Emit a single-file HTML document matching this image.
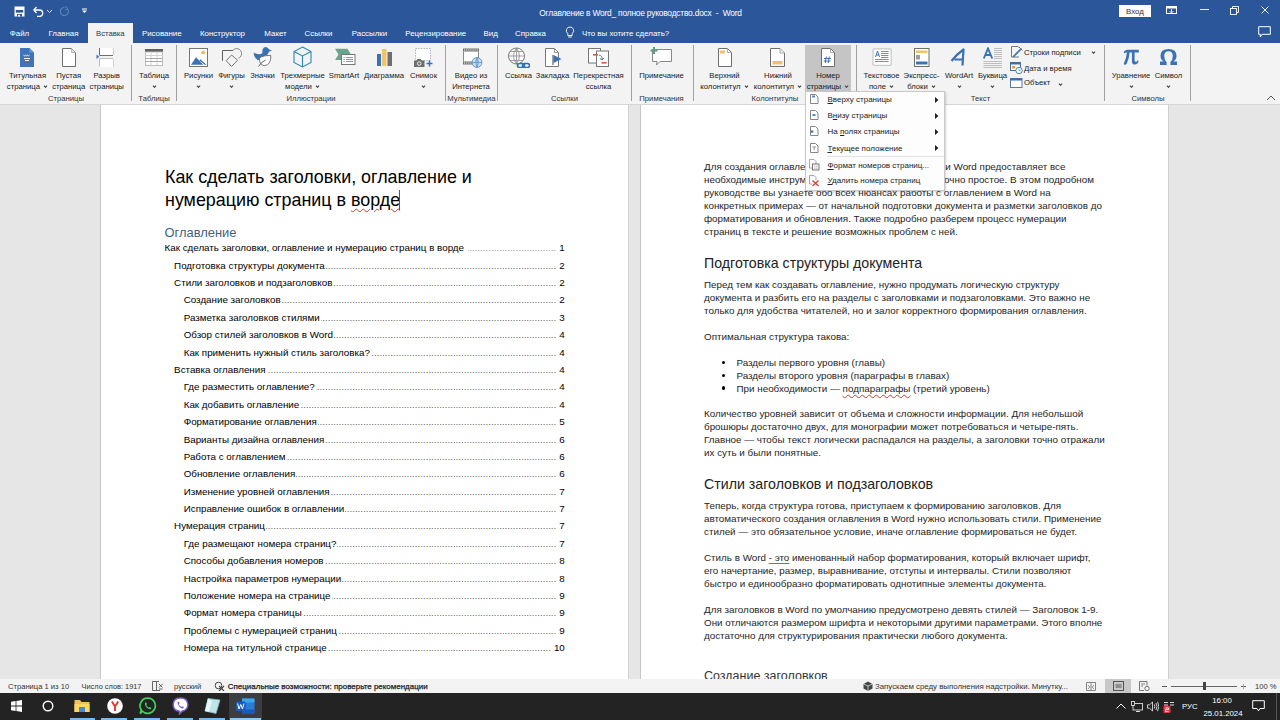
<!DOCTYPE html><html><head><meta charset="utf-8"><style>
*{margin:0;padding:0;box-sizing:border-box}
html,body{width:1280px;height:720px;overflow:hidden;background:#fff}
body{position:relative;font-family:"Liberation Sans",sans-serif}
.t{position:absolute;white-space:nowrap;line-height:normal}
.toc{position:absolute;display:flex;white-space:nowrap;line-height:normal;color:#000}
.toc .ld{flex:1;margin:0 3px 0 1px;overflow:hidden;direction:rtl;color:#666;letter-spacing:0}
.toc .pn{text-align:right}
.dd{vertical-align:1.5px;margin-left:1px}
.sq{text-decoration:underline wavy #d33;text-decoration-thickness:1px;text-underline-offset:2px}
.gq{text-decoration:underline solid #4a7fd0;text-decoration-thickness:1px;text-underline-offset:2px}
</style></head><body><div style="position:absolute;left:0px;top:0px;width:1280px;height:43px;background:#2b579a;"></div>
<div style="position:absolute;left:0px;top:43px;width:1280px;height:61px;background:#f3f3f3;"></div>
<div style="position:absolute;left:0px;top:104px;width:1280px;height:1px;background:#d6d6d6;"></div>
<div style="position:absolute;left:0px;top:105px;width:1280px;height:574px;background:#e6e6e6;"></div>
<div style="position:absolute;left:100px;top:105px;width:1px;height:574px;background:#c6c6c6;"></div>
<div style="position:absolute;left:101px;top:105px;width:527px;height:574px;background:#fff;"></div>
<div style="position:absolute;left:628px;top:105px;width:1px;height:574px;background:#d0d0d0;"></div>
<div style="position:absolute;left:640px;top:105px;width:1px;height:574px;background:#c6c6c6;"></div>
<div style="position:absolute;left:641px;top:105px;width:527px;height:574px;background:#fff;"></div>
<div style="position:absolute;left:1168px;top:105px;width:1px;height:574px;background:#d0d0d0;"></div>
<div style="position:absolute;left:0px;top:679px;width:1280px;height:14px;background:#f3f3f3;"></div>
<div style="position:absolute;left:0px;top:693px;width:1280px;height:27px;background:#232324;"></div>
<div class="t " style="left:440.5px;width:400px;text-align:center;top:7.60px;font-size:8.4px;color:#fff;letter-spacing:-0.2px">Оглавление в Word_ полное руководство.docx&nbsp;&nbsp;-&nbsp;&nbsp;Word</div>
<div class="t " style="left:-180.5px;width:400px;text-align:center;top:28.85px;font-size:7.9px;color:#fff;">Файл</div>
<div class="t " style="left:-136.5px;width:400px;text-align:center;top:28.85px;font-size:7.9px;color:#fff;">Главная</div>
<div class="t " style="left:-38.25px;width:400px;text-align:center;top:28.85px;font-size:7.9px;color:#fff;">Рисование</div>
<div class="t " style="left:22.5px;width:400px;text-align:center;top:28.85px;font-size:7.9px;color:#fff;">Конструктор</div>
<div class="t " style="left:75.5px;width:400px;text-align:center;top:28.85px;font-size:7.9px;color:#fff;">Макет</div>
<div class="t " style="left:118.5px;width:400px;text-align:center;top:28.85px;font-size:7.9px;color:#fff;">Ссылки</div>
<div class="t " style="left:169.5px;width:400px;text-align:center;top:28.85px;font-size:7.9px;color:#fff;">Рассылки</div>
<div class="t " style="left:235.75px;width:400px;text-align:center;top:28.85px;font-size:7.9px;color:#fff;">Рецензирование</div>
<div class="t " style="left:290.75px;width:400px;text-align:center;top:28.85px;font-size:7.9px;color:#fff;">Вид</div>
<div class="t " style="left:330.5px;width:400px;text-align:center;top:28.85px;font-size:7.9px;color:#fff;">Справка</div>
<div style="position:absolute;left:88px;top:23px;width:45px;height:20px;background:#f3f3f3;"></div>
<div class="t " style="left:-89.7px;width:400px;text-align:center;top:29.03px;font-size:7.7px;color:#2f3a48;">Вставка</div>
<div class="t " style="left:582px;top:28.85px;font-size:7.9px;color:#fff;">Что вы хотите сделать?</div>
<div style="position:absolute;left:1119px;top:5px;width:32px;height:12px;background:#fff;"></div>
<div class="t " style="left:935px;width:400px;text-align:center;top:6.85px;font-size:7.9px;color:#333;">Вход</div>
<div style="position:absolute;left:805px;top:45px;width:46px;height:46px;background:#c5c5c5;"></div>
<div class="t " style="left:-172.5px;width:400px;text-align:center;top:70.83px;font-size:7.7px;color:#1a1a1a;">Титульная</div>
<div class="t " style="left:-172.5px;width:400px;text-align:center;top:82.03px;font-size:7.7px;color:#1a1a1a;">страница <svg class="dd" width="5" height="3" viewBox="0 0 5 3"><path d="M0.9 0.7 L2.5 2.3 L4.1 0.7" fill="none" stroke="#444" stroke-width="1.1"/></svg></div>
<div class="t " style="left:-131.3px;width:400px;text-align:center;top:70.83px;font-size:7.7px;color:#1a1a1a;">Пустая</div>
<div class="t " style="left:-131.3px;width:400px;text-align:center;top:82.03px;font-size:7.7px;color:#1a1a1a;">страница</div>
<div class="t " style="left:-93.3px;width:400px;text-align:center;top:70.83px;font-size:7.7px;color:#1a1a1a;">Разрыв</div>
<div class="t " style="left:-93.3px;width:400px;text-align:center;top:82.03px;font-size:7.7px;color:#1a1a1a;">страницы</div>
<div class="t " style="left:-134px;width:400px;text-align:center;top:94.23px;font-size:7.7px;color:#333;">Страницы</div>
<div style="position:absolute;left:131px;top:45px;width:1px;height:56px;background:#a0a0a0;"></div>
<div class="t " style="left:-46px;width:400px;text-align:center;top:70.83px;font-size:7.7px;color:#1a1a1a;">Таблица</div>
<svg style="position:absolute;left:151.5px;top:84.5px" width="5" height="3" viewBox="0 0 5 3"><path d="M0.9 0.7 L2.5 2.3 L4.1 0.7" fill="none" stroke="#444" stroke-width="1.1"/></svg>
<div class="t " style="left:-46px;width:400px;text-align:center;top:94.23px;font-size:7.7px;color:#333;">Таблицы</div>
<div style="position:absolute;left:176px;top:45px;width:1px;height:56px;background:#a0a0a0;"></div>
<div class="t " style="left:-1.5px;width:400px;text-align:center;top:70.83px;font-size:7.7px;color:#1a1a1a;">Рисунки</div>
<svg style="position:absolute;left:196.0px;top:84.5px" width="5" height="3" viewBox="0 0 5 3"><path d="M0.9 0.7 L2.5 2.3 L4.1 0.7" fill="none" stroke="#444" stroke-width="1.1"/></svg>
<div class="t " style="left:31.5px;width:400px;text-align:center;top:70.83px;font-size:7.7px;color:#1a1a1a;">Фигуры</div>
<svg style="position:absolute;left:229.0px;top:84.5px" width="5" height="3" viewBox="0 0 5 3"><path d="M0.9 0.7 L2.5 2.3 L4.1 0.7" fill="none" stroke="#444" stroke-width="1.1"/></svg>
<div class="t " style="left:62.5px;width:400px;text-align:center;top:70.83px;font-size:7.7px;color:#1a1a1a;">Значки</div>
<div class="t " style="left:102.5px;width:400px;text-align:center;top:70.83px;font-size:7.7px;color:#1a1a1a;">Трехмерные</div>
<div class="t " style="left:102.5px;width:400px;text-align:center;top:82.03px;font-size:7.7px;color:#1a1a1a;">модели <svg class="dd" width="5" height="3" viewBox="0 0 5 3"><path d="M0.9 0.7 L2.5 2.3 L4.1 0.7" fill="none" stroke="#444" stroke-width="1.1"/></svg></div>
<div class="t " style="left:144px;width:400px;text-align:center;top:70.83px;font-size:7.7px;color:#1a1a1a;">SmartArt</div>
<div class="t " style="left:184px;width:400px;text-align:center;top:70.83px;font-size:7.7px;color:#1a1a1a;">Диаграмма</div>
<div class="t " style="left:223.5px;width:400px;text-align:center;top:70.83px;font-size:7.7px;color:#1a1a1a;">Снимок</div>
<svg style="position:absolute;left:421.0px;top:84.5px" width="5" height="3" viewBox="0 0 5 3"><path d="M0.9 0.7 L2.5 2.3 L4.1 0.7" fill="none" stroke="#444" stroke-width="1.1"/></svg>
<div class="t " style="left:111px;width:400px;text-align:center;top:94.23px;font-size:7.7px;color:#333;">Иллюстрации</div>
<div style="position:absolute;left:445px;top:45px;width:1px;height:56px;background:#a0a0a0;"></div>
<div class="t " style="left:271px;width:400px;text-align:center;top:70.83px;font-size:7.7px;color:#1a1a1a;">Видео из</div>
<div class="t " style="left:271px;width:400px;text-align:center;top:82.03px;font-size:7.7px;color:#1a1a1a;">Интернета</div>
<div class="t " style="left:271.5px;width:400px;text-align:center;top:94.23px;font-size:7.7px;color:#333;">Мультимедиа</div>
<div style="position:absolute;left:497px;top:45px;width:1px;height:56px;background:#a0a0a0;"></div>
<div class="t " style="left:318.5px;width:400px;text-align:center;top:70.83px;font-size:7.7px;color:#1a1a1a;">Ссылка</div>
<div class="t " style="left:352.5px;width:400px;text-align:center;top:70.83px;font-size:7.7px;color:#1a1a1a;">Закладка</div>
<div class="t " style="left:398.5px;width:400px;text-align:center;top:70.83px;font-size:7.7px;color:#1a1a1a;">Перекрестная</div>
<div class="t " style="left:398.5px;width:400px;text-align:center;top:82.03px;font-size:7.7px;color:#1a1a1a;">ссылка</div>
<div class="t " style="left:364.5px;width:400px;text-align:center;top:94.23px;font-size:7.7px;color:#333;">Ссылки</div>
<div style="position:absolute;left:630.5px;top:45px;width:1px;height:56px;background:#a0a0a0;"></div>
<div class="t " style="left:461.5px;width:400px;text-align:center;top:70.83px;font-size:7.7px;color:#1a1a1a;">Примечание</div>
<div class="t " style="left:461.5px;width:400px;text-align:center;top:94.23px;font-size:7.7px;color:#333;">Примечания</div>
<div style="position:absolute;left:692.5px;top:45px;width:1px;height:56px;background:#a0a0a0;"></div>
<div class="t " style="left:524.5px;width:400px;text-align:center;top:70.83px;font-size:7.7px;color:#1a1a1a;">Верхний</div>
<div class="t " style="left:524.5px;width:400px;text-align:center;top:82.03px;font-size:7.7px;color:#1a1a1a;">колонтитул <svg class="dd" width="5" height="3" viewBox="0 0 5 3"><path d="M0.9 0.7 L2.5 2.3 L4.1 0.7" fill="none" stroke="#444" stroke-width="1.1"/></svg></div>
<div class="t " style="left:578px;width:400px;text-align:center;top:70.83px;font-size:7.7px;color:#1a1a1a;">Нижний</div>
<div class="t " style="left:578px;width:400px;text-align:center;top:82.03px;font-size:7.7px;color:#1a1a1a;">колонтитул <svg class="dd" width="5" height="3" viewBox="0 0 5 3"><path d="M0.9 0.7 L2.5 2.3 L4.1 0.7" fill="none" stroke="#444" stroke-width="1.1"/></svg></div>
<div class="t " style="left:628px;width:400px;text-align:center;top:70.83px;font-size:7.7px;color:#1a1a1a;">Номер</div>
<div class="t " style="left:628px;width:400px;text-align:center;top:82.03px;font-size:7.7px;color:#1a1a1a;">страницы <svg class="dd" width="5" height="3" viewBox="0 0 5 3"><path d="M0.9 0.7 L2.5 2.3 L4.1 0.7" fill="none" stroke="#444" stroke-width="1.1"/></svg></div>
<div class="t " style="left:575px;width:400px;text-align:center;top:94.23px;font-size:7.7px;color:#333;">Колонтитулы</div>
<div style="position:absolute;left:856px;top:45px;width:1px;height:56px;background:#a0a0a0;"></div>
<div class="t " style="left:681.5px;width:400px;text-align:center;top:70.83px;font-size:7.7px;color:#1a1a1a;">Текстовое</div>
<div class="t " style="left:681.5px;width:400px;text-align:center;top:82.03px;font-size:7.7px;color:#1a1a1a;">поле <svg class="dd" width="5" height="3" viewBox="0 0 5 3"><path d="M0.9 0.7 L2.5 2.3 L4.1 0.7" fill="none" stroke="#444" stroke-width="1.1"/></svg></div>
<div class="t " style="left:721.5px;width:400px;text-align:center;top:70.83px;font-size:7.7px;color:#1a1a1a;">Экспресс-</div>
<div class="t " style="left:721.5px;width:400px;text-align:center;top:82.03px;font-size:7.7px;color:#1a1a1a;">блоки <svg class="dd" width="5" height="3" viewBox="0 0 5 3"><path d="M0.9 0.7 L2.5 2.3 L4.1 0.7" fill="none" stroke="#444" stroke-width="1.1"/></svg></div>
<div class="t " style="left:759px;width:400px;text-align:center;top:70.83px;font-size:7.7px;color:#1a1a1a;">WordArt</div>
<svg style="position:absolute;left:956.5px;top:84.5px" width="5" height="3" viewBox="0 0 5 3"><path d="M0.9 0.7 L2.5 2.3 L4.1 0.7" fill="none" stroke="#444" stroke-width="1.1"/></svg>
<div class="t " style="left:792.5px;width:400px;text-align:center;top:70.83px;font-size:7.7px;color:#1a1a1a;">Буквица</div>
<svg style="position:absolute;left:990.0px;top:84.5px" width="5" height="3" viewBox="0 0 5 3"><path d="M0.9 0.7 L2.5 2.3 L4.1 0.7" fill="none" stroke="#444" stroke-width="1.1"/></svg>
<div class="t " style="left:1024px;top:47.53px;font-size:7.7px;color:#1a1a1a;">Строки подписи</div>
<svg style="position:absolute;left:1090.5px;top:50.5px" width="5" height="3" viewBox="0 0 5 3"><path d="M0.9 0.7 L2.5 2.3 L4.1 0.7" fill="none" stroke="#444" stroke-width="1.1"/></svg>
<div class="t " style="left:1024px;top:63.63px;font-size:7.7px;color:#1a1a1a;">Дата и время</div>
<div class="t " style="left:1024px;top:78.43px;font-size:7.7px;color:#1a1a1a;">Объект</div>
<svg style="position:absolute;left:1058.0px;top:82.5px" width="5" height="3" viewBox="0 0 5 3"><path d="M0.9 0.7 L2.5 2.3 L4.1 0.7" fill="none" stroke="#444" stroke-width="1.1"/></svg>
<div class="t " style="left:780.5px;width:400px;text-align:center;top:94.23px;font-size:7.7px;color:#333;">Текст</div>
<div style="position:absolute;left:1103.5px;top:45px;width:1px;height:56px;background:#a0a0a0;"></div>
<div class="t " style="left:931px;width:400px;text-align:center;top:70.83px;font-size:7.7px;color:#1a1a1a;">Уравнение</div>
<svg style="position:absolute;left:1128.5px;top:84.5px" width="5" height="3" viewBox="0 0 5 3"><path d="M0.9 0.7 L2.5 2.3 L4.1 0.7" fill="none" stroke="#444" stroke-width="1.1"/></svg>
<div class="t " style="left:968.5px;width:400px;text-align:center;top:70.83px;font-size:7.7px;color:#1a1a1a;">Символ</div>
<svg style="position:absolute;left:1166.0px;top:84.5px" width="5" height="3" viewBox="0 0 5 3"><path d="M0.9 0.7 L2.5 2.3 L4.1 0.7" fill="none" stroke="#444" stroke-width="1.1"/></svg>
<div class="t " style="left:948px;width:400px;text-align:center;top:94.23px;font-size:7.7px;color:#333;">Символы</div>
<div style="position:absolute;left:1190px;top:45px;width:1px;height:56px;background:#a0a0a0;"></div>
<svg style="position:absolute;left:1266px;top:95px" width="10" height="6" viewBox="0 0 10 6"><path d="M1 5 L5 1 L9 5" fill="none" stroke="#555" stroke-width="1"/></svg>
<svg style="position:absolute;left:20px;top:48px" width="14" height="19" viewBox="0 0 14 19"><path d="M0 0 H9.5 L14 4.5 V19 H0Z" fill="#3f74b9"/><path d="M9.5 0 L14 4.5 H9.5Z" fill="#6d98cf"/><path d="M3.5 7.2 q1 1.2 2 0 q1 1.2 2 0 q1 1.2 2 0" fill="none" stroke="#fff" stroke-width="0.9"/><rect x="4" y="10" width="6" height="1" fill="#fff"/><rect x="5" y="12" width="4" height="1" fill="#fff"/></svg>
<svg style="position:absolute;left:62px;top:48px" width="14" height="19" viewBox="0 0 14 19"><path d="M0.5 0.5 H9.5 L13.5 4.5 V18.5 H0.5Z" fill="#fff" stroke="#6e6e6e" stroke-width="1"/><path d="M9.5 0.5 V4.5 H13.5" fill="#ddd" stroke="#aaa" stroke-width="0.8"/></svg>
<svg style="position:absolute;left:96px;top:48px" width="19" height="19" viewBox="0 0 19 19"><rect x="3.5" y="0" width="14" height="7.5" fill="#fff"/><rect x="3.5" y="10" width="14" height="9" fill="#fff"/><path d="M3.5 0 V7.5 H17" fill="none" stroke="#6e6e6e"/><path d="M3.5 18.5 V10.5 H17" fill="none" stroke="#bdbdbd"/><path d="M17.5 0 V7" stroke="#cfcfcf" fill="none"/><path d="M17.5 11 V19" stroke="#d5d5d5" fill="none"/><path d="M0.5 6.5 L3.2 8.8 L0.5 11Z" fill="#3b72b6"/></svg>
<svg style="position:absolute;left:145px;top:49px" width="18" height="17" viewBox="0 0 18 17"><rect x="0" y="0" width="18" height="3" fill="#5f5f5f"/><rect x="0.5" y="3" width="17" height="13.5" fill="#fff" stroke="#bdbdbd"/><path d="M0.5 6.5 H17.5 M6 3 V16.5 M12 3 V16.5" stroke="#d4d4d4" fill="none"/><path d="M0.5 9.5 H17.5 M0.5 12.5 H17.5" stroke="#a8a8a8" fill="none"/></svg>
<svg style="position:absolute;left:189px;top:48px" width="19" height="19" viewBox="0 0 19 19"><rect x="0.5" y="0.5" width="18" height="18" fill="#fff" stroke="#767676"/><circle cx="14.2" cy="4.5" r="1.8" fill="#f2b450"/><path d="M2 16.7 L7 9.3 L14.3 16.7Z" fill="#3b72b6"/><path d="M11.3 11.2 L17.5 16.7 L15.8 16.7 L10.3 12.2Z" fill="#3b66a6"/></svg>
<svg style="position:absolute;left:221px;top:46px" width="21" height="22" viewBox="0 0 21 22"><path d="M1.5 14.8 V4.5 H12" fill="none" stroke="#606060" stroke-width="1"/><path d="M12 4.2 A5 5 0 1 1 17.3 12.3" fill="none" stroke="#8a8a8a" stroke-width="1"/><path d="M10.6 9 L16.5 14.2 L10.6 20.5 L5.2 14.7Z" fill="none" stroke="#777" stroke-width="1"/></svg>
<svg style="position:absolute;left:252px;top:46px" width="21" height="22" viewBox="0 0 21 22"><path d="M1.5 6.5 Q4 8.5 8 8.3 Q10 8 10.5 6.5 Q9.8 3 12 1.5 Q14.5 0 16.5 2.5 L17 3.5 L20 4.3 L17 5.8 Q16 9 13 10.5 Q10 12.5 8 13.5 L6 14.3 Q2 12 1.5 6.5Z" fill="#3b72b6"/><path d="M7.5 12 Q9 10.5 13 9.8 L18.7 9.3 Q19.3 15.5 15.5 18.8 Q12 20.8 9.3 18.5 Q7 16 7.5 12Z" fill="#fff" stroke="#6a6a6a" stroke-width="0.9"/><path d="M6.5 20.5 Q9.5 15.5 13.5 14.2" fill="none" stroke="#555" stroke-width="0.9"/></svg>
<svg style="position:absolute;left:293px;top:46px" width="19" height="22" viewBox="0 0 19 22"><path d="M9.5 1 L18 5.5 V16.5 L9.5 21 L1 16.5 V5.5Z M1 5.5 L9.5 10 L18 5.5 M9.5 10 V21" fill="none" stroke="#2e86b0" stroke-width="1.1"/></svg>
<svg style="position:absolute;left:334px;top:48px" width="22" height="18" viewBox="0 0 22 18"><path d="M1 0.8 H13.5 L17 6.5 L13.5 12 H1 L4.5 6.5Z" fill="#6aa58c"/><rect x="7.5" y="6.5" width="13.5" height="10" fill="#fff" stroke="#777"/><path d="M12 9.5 H19 M12 11.5 H19 M12 13.5 H19" stroke="#888" stroke-width="0.9"/><path d="M9.5 9.5 H10.8 M9.5 11.5 H10.8 M9.5 13.5 H10.8" stroke="#888" stroke-width="0.9"/></svg>
<svg style="position:absolute;left:376px;top:48px" width="17" height="19" viewBox="0 0 17 19"><rect x="1" y="6" width="4" height="12" fill="#3b72b6"/><rect x="6" y="1" width="4.5" height="17" fill="#f0c36b"/><rect x="11.5" y="4" width="4.5" height="14" fill="#6e6e6e"/></svg>
<svg style="position:absolute;left:413px;top:48px" width="21" height="20" viewBox="0 0 21 20"><rect x="2.5" y="0.5" width="15" height="12" fill="#fff" stroke="#a9b4c2" stroke-dasharray="1.5 1.2"/><path d="M1 12.5 H3.5 L4.5 11 H7.5 L8.5 12.5 H11.5 V19 H1Z" fill="#6e6e6e"/><circle cx="6.2" cy="15.6" r="1.8" fill="none" stroke="#fff" stroke-width="0.9"/><path d="M16.5 12.5 V18.5 M13.5 15.5 H19.5" stroke="#3b72b6" stroke-width="1.5"/></svg>
<svg style="position:absolute;left:462px;top:48px" width="21" height="20" viewBox="0 0 21 20"><rect x="1" y="0.5" width="16" height="16" fill="#fff"/><rect x="1" y="0.5" width="16" height="3" fill="#6e6e6e"/><rect x="1" y="13.5" width="16" height="3" fill="#6e6e6e"/><path d="M2 2 H16 M2 15 H16" stroke="#fff" stroke-width="1" stroke-dasharray="1.2 0.9"/><path d="M1.5 3.5 V13.5 M16.5 3.5 V13.5" stroke="#888"/><circle cx="15" cy="14.5" r="4.9" fill="#c9dcf0" stroke="#5b8fc9" stroke-width="0.9"/><path d="M15 9.6 V19.4 M10.2 14.5 H19.8 M15 9.6 Q12 14.5 15 19.4 M15 9.6 Q18 14.5 15 19.4" stroke="#5b8fc9" stroke-width="0.7" fill="none"/></svg>
<svg style="position:absolute;left:507px;top:47px" width="23" height="21" viewBox="0 0 23 21"><circle cx="9.5" cy="9" r="8" fill="#fff" stroke="#777"/><path d="M1.5 9 H17.5 M9.5 1 V17 M9.5 1 Q3.5 9 9.5 17 M9.5 1 Q15.5 9 9.5 17 M3 4.5 H16 M3 13.5 H16" stroke="#888" stroke-width="0.8" fill="none"/><path d="M12.5 16.5 h3 a2 2 0 0 1 0 4 h-3 a2 2 0 0 1 0 -4Z M17.5 16.5 h3 a2 2 0 0 1 0 4 h-3 a2 2 0 0 1 0 -4Z" fill="none" stroke="#2f6fb5" stroke-width="1.6"/></svg>
<svg style="position:absolute;left:544px;top:48px" width="18" height="19" viewBox="0 0 18 19"><path d="M1.5 0.5 H10.5 L14.5 4.5 V18.5 H1.5Z" fill="#fff" stroke="#777"/><path d="M10.5 0.5 V4.5 H14.5" fill="none" stroke="#999"/><path d="M9 7 V17" stroke="#6e6e6e" stroke-width="1.3"/><path d="M9.5 7 L17.5 11 L9.5 15Z" fill="#3b72b6"/></svg>
<svg style="position:absolute;left:588px;top:48px" width="21" height="19" viewBox="0 0 21 19"><rect x="0.5" y="0.5" width="12" height="14.5" fill="#fff" stroke="#777"/><rect x="8.5" y="3" width="12" height="15.5" fill="#fff" stroke="#777"/><rect x="5" y="6" width="5" height="1.6" fill="#d9553b"/><rect x="13.5" y="14" width="5" height="1.6" fill="#d9553b"/><path d="M11 7 Q15 8 14 11.5 M12 10.5 L14 12 L16 10" fill="none" stroke="#6e6e6e" stroke-width="1"/></svg>
<svg style="position:absolute;left:650px;top:47px" width="23" height="20" viewBox="0 0 23 20"><path d="M2.5 2.5 H21.5 V14.5 H10 L6.5 18 L7 14.5 H2.5Z" fill="#fff" stroke="#888"/><path d="M4 0 V7 M0.5 3.5 H7.5" stroke="#5f9c86" stroke-width="2"/></svg>
<svg style="position:absolute;left:718px;top:48px" width="14" height="19" viewBox="0 0 14 19"><path d="M0.5 0.5 H9.5 L13.5 4.5 V18.5 H0.5Z" fill="#fff" stroke="#6e6e6e"/><path d="M9.5 0.5 V4.5 H13.5" fill="none" stroke="#aaa"/><rect x="2" y="2.5" width="5" height="3" fill="#efc16b"/></svg>
<svg style="position:absolute;left:770px;top:48px" width="15" height="19" viewBox="0 0 15 19"><path d="M0.5 0.5 H10 L14.5 5 V18.5 H0.5Z" fill="#fff" stroke="#6e6e6e"/><path d="M10 0.5 V5 H14.5" fill="#e8f0f8" stroke="#aaa"/><rect x="2.5" y="13" width="10" height="3.5" fill="#efc16b"/></svg>
<svg style="position:absolute;left:821px;top:48px" width="14" height="19" viewBox="0 0 14 19"><path d="M0.5 0.5 H9.5 L13.5 4.5 V18.5 H0.5Z" fill="#fff" stroke="#6e6e6e"/><path d="M9.5 0.5 V4.5 H13.5" fill="none" stroke="#aaa"/><path d="M5.3 8.5 L4.3 15 M8.3 8.5 L7.3 15 M3 10.5 H9.8 M2.7 13 H9.5" stroke="#3b72b6" stroke-width="1"/></svg>
<svg style="position:absolute;left:872px;top:48px" width="20" height="18" viewBox="0 0 20 18"><rect x="1" y="0.8" width="18.2" height="16.5" rx="1" fill="#fff" stroke="#c9c9c9" stroke-width="1.2"/><path d="M3.5 9 L5.5 3 L7.5 9 M4.2 7 H6.8" fill="none" stroke="#3b72b6" stroke-width="1"/><path d="M9 3.5 H16.5 M9 5.5 H16.5 M9 7.5 H16.5 M9 9.5 H16.5 M3 11.5 H16.5 M3 13.5 H16.5" stroke="#6e6e6e" stroke-width="0.8"/></svg>
<svg style="position:absolute;left:914px;top:48px" width="16" height="19" viewBox="0 0 16 19"><rect x="0.5" y="0.5" width="14.5" height="18" fill="#fff" stroke="#6e6e6e"/><rect x="2" y="2.5" width="11.5" height="2.5" fill="#efc16b"/><rect x="2" y="7" width="4" height="4.5" fill="#9d9d9d"/><rect x="2" y="13.5" width="11.5" height="3" fill="#3b72b6"/></svg>
<svg style="position:absolute;left:950px;top:48px" width="16" height="19" viewBox="0 0 16 19"><path d="M1.5 13 Q7 6 13.5 1.5 L12.5 17.5 M4.5 11.5 H13" fill="none" stroke="#3b72b6" stroke-width="2.2" stroke-linejoin="round"/></svg>
<svg style="position:absolute;left:983px;top:47px" width="20" height="21" viewBox="0 0 20 21"><path d="M0.8 11.5 L5 1.5 L9.2 11.5 M2.5 8 H7.5" fill="none" stroke="#3b72b6" stroke-width="1.9"/><path d="M11 1.5 H19 M11 3.5 H19 M11 5.5 H19 M11 7.5 H19 M11 9.5 H19 M11 11.5 H19 M0.5 14.5 H19 M0.5 16.5 H19 M0.5 18.5 H19 M0.5 20.5 H19" stroke="#9a9a9a" stroke-width="0.6"/></svg>
<svg style="position:absolute;left:1010px;top:46px" width="13" height="12" viewBox="0 0 13 12"><path d="M1.5 0.5 H8 L9.5 2 M1.5 0.5 V11 H9" fill="none" stroke="#777"/><path d="M3 11 L11.5 2.5" stroke="#3b72b6" stroke-width="1.6"/><path d="M9 1 L12.5 4.5" stroke="#6e6e6e" stroke-width="1"/></svg>
<svg style="position:absolute;left:1010px;top:62px" width="13" height="12" viewBox="0 0 13 12"><rect x="0.5" y="0.5" width="10" height="8" fill="#fff" stroke="#4a6b9a"/><rect x="0.5" y="0.5" width="10" height="2" fill="#4a6b9a"/><rect x="2" y="4" width="3" height="2.5" fill="#e59a3a"/><circle cx="9" cy="8.5" r="3.2" fill="#fff" stroke="#3b72b6" stroke-width="0.9"/><path d="M9 6.8 V8.6 H10.5" stroke="#3b72b6" stroke-width="0.7" fill="none"/></svg>
<svg style="position:absolute;left:1010px;top:78px" width="13" height="10" viewBox="0 0 13 10"><rect x="0.5" y="0.5" width="11.5" height="9" fill="#fff" stroke="#5a7aa8"/><rect x="0.5" y="0.5" width="11.5" height="2" fill="#3e6aa6"/></svg>
<svg style="position:absolute;left:1123px;top:49px" width="16" height="16" viewBox="0 0 16 16"><path d="M0.6 3.6 Q1.6 0.8 4.8 0.8 H15.8 V3.4 H11.6 V11.2 Q11.6 12.8 12.9 12.8 Q14.2 12.8 14.7 11.3 L15.6 11.8 Q14.9 15.6 11.9 15.6 Q8.9 15.6 8.9 12.2 V3.4 H6.6 Q6.2 9.5 3.8 14.6 Q3.1 15.8 1.9 15.8 Q0.5 15.8 0.8 14.5 Q3.4 9.6 3.9 3.4 Q2.2 3.3 1.5 4.3Z" fill="#3b72b6"/></svg>
<svg style="position:absolute;left:1160px;top:49px" width="17" height="16" viewBox="0 0 17 16"><path d="M0 16 V12.6 H3.8 Q0.5 10.6 0.5 7 Q0.5 0 8.5 0 Q16.5 0 16.5 7 Q16.5 10.6 13.2 12.6 H17 V16 H10.4 V13 Q12.8 11 12.8 7 Q12.8 2.2 8.5 2.2 Q4.2 2.2 4.2 7 Q4.2 11 6.6 13 V16Z" fill="#3b72b6"/></svg>
<svg style="position:absolute;left:14px;top:6px" width="11" height="11" viewBox="0 0 11 11"><path d="M0.5 0.5 H10.5 V10.5 H0.5Z" fill="#fff"/><rect x="1.8" y="4" width="7.4" height="2.6" fill="#2b579a"/><rect x="3" y="8" width="5" height="2.5" fill="#2b579a"/><rect x="4" y="8.8" width="2" height="1.7" fill="#fff"/></svg>
<svg style="position:absolute;left:33px;top:6px" width="11" height="11" viewBox="0 0 11 11"><path d="M1 4 H6.5 A3.2 3.2 0 0 1 6.5 10.4 H4" fill="none" stroke="#fff" stroke-width="1.3"/><path d="M3.5 1 L0.8 4 L3.5 7" fill="none" stroke="#fff" stroke-width="1.3"/></svg>
<svg style="position:absolute;left:46px;top:9px" width="7" height="5" viewBox="0 0 7 5"><path d="M1 1 L3.5 3.5 L6 1" fill="none" stroke="#dde" stroke-width="1"/></svg>
<svg style="position:absolute;left:59px;top:6px" width="11" height="11" viewBox="0 0 11 11"><path d="M8.5 3 A4 4 0 1 1 5.5 1.5" fill="none" stroke="#5d84bd" stroke-width="1.1"/><path d="M6 0 L9 2.5 L6 4" fill="none" stroke="#5d84bd" stroke-width="1"/></svg>
<svg style="position:absolute;left:81px;top:8px" width="7" height="6" viewBox="0 0 7 6"><rect x="1" y="0.5" width="5" height="1" fill="#fff"/><path d="M1 2.5 L3.5 5 L6 2.5Z" fill="#fff"/></svg>
<svg style="position:absolute;left:565px;top:26px" width="10" height="13" viewBox="0 0 10 13"><path d="M5 1 A3.6 3.6 0 0 1 7.2 7.5 V9.5 H2.8 V7.5 A3.6 3.6 0 0 1 5 1Z" fill="none" stroke="#fff" stroke-width="0.9"/><path d="M3.2 11 H6.8" stroke="#fff"/></svg>
<svg style="position:absolute;left:1166px;top:6px" width="12" height="8" viewBox="0 0 12 8"><rect x="0.5" y="0.5" width="10" height="7" fill="none" stroke="#fff"/><rect x="0.5" y="0.5" width="10" height="2" fill="#fff"/><path d="M5.5 3 V7.5 M3.5 5 L5.5 7 L7.5 5" stroke="#fff" stroke-width="0.8" fill="none"/></svg>
<div style="position:absolute;left:1200px;top:9px;width:9px;height:1px;background:#e8eef6;"></div>
<svg style="position:absolute;left:1230px;top:6px" width="9" height="9" viewBox="0 0 9 9"><rect x="0.5" y="2.5" width="6" height="6" fill="none" stroke="#fff" stroke-width="0.9"/><path d="M2.5 2.5 V0.5 H8.5 V6.5 H6.5" fill="none" stroke="#fff" stroke-width="0.9"/></svg>
<svg style="position:absolute;left:1261px;top:6px" width="8" height="8" viewBox="0 0 8 8"><path d="M0.5 0.5 L7.5 7.5 M7.5 0.5 L0.5 7.5" stroke="#fff" stroke-width="0.9"/></svg>
<svg style="position:absolute;left:1258px;top:26px" width="13" height="12" viewBox="0 0 13 12"><path d="M0.7 0.7 H12.3 V8.3 H4 L2.3 11 V8.3 H0.7Z" fill="none" stroke="#fff" stroke-width="1"/></svg>
<div class="t " style="left:165px;top:166.60px;font-size:17.9px;color:#000;">Как сделать заголовки, оглавление и</div>
<div class="t " style="left:165px;top:189.60px;font-size:17.9px;color:#000;">нумерацию страниц в <span class="sq">ворде</span></div>
<div class="t " style="left:164.5px;top:225.13px;font-size:12.9px;color:#3f5f87;">Оглавление</div>
<div class="toc" style="left:164.5px;top:242.23px;width:400.3px;font-size:9.8px"><span class="tx">Как сделать заголовки, оглавление и нумерацию страниц в ворде</span><span class="ld" style="margin-left:4px;color:#999">............................................................................................................................................</span><span class="pn">1</span></div>
<div class="toc" style="left:174.1px;top:259.62px;width:390.7px;font-size:9.8px"><span class="tx">Подготовка структуры документа</span><span class="ld">............................................................................................................................................</span><span class="pn">2</span></div>
<div class="toc" style="left:174.1px;top:277.01px;width:390.7px;font-size:9.8px"><span class="tx">Стили заголовков и подзаголовков</span><span class="ld">............................................................................................................................................</span><span class="pn">2</span></div>
<div class="toc" style="left:183.7px;top:294.40px;width:381.1px;font-size:9.8px"><span class="tx">Создание заголовков</span><span class="ld">............................................................................................................................................</span><span class="pn">2</span></div>
<div class="toc" style="left:183.7px;top:311.79px;width:381.1px;font-size:9.8px"><span class="tx">Разметка заголовков стилями</span><span class="ld">............................................................................................................................................</span><span class="pn">3</span></div>
<div class="toc" style="left:183.7px;top:329.18px;width:381.1px;font-size:9.8px"><span class="tx">Обзор стилей заголовков в Word</span><span class="ld">............................................................................................................................................</span><span class="pn">4</span></div>
<div class="toc" style="left:183.7px;top:346.57px;width:381.1px;font-size:9.8px"><span class="tx">Как применить нужный стиль заголовка?</span><span class="ld">............................................................................................................................................</span><span class="pn">4</span></div>
<div class="toc" style="left:174.1px;top:363.96px;width:390.7px;font-size:9.8px"><span class="tx">Вставка оглавления</span><span class="ld">............................................................................................................................................</span><span class="pn">4</span></div>
<div class="toc" style="left:183.7px;top:381.35px;width:381.1px;font-size:9.8px"><span class="tx">Где разместить оглавление?</span><span class="ld">............................................................................................................................................</span><span class="pn">4</span></div>
<div class="toc" style="left:183.7px;top:398.74px;width:381.1px;font-size:9.8px"><span class="tx">Как добавить оглавление</span><span class="ld">............................................................................................................................................</span><span class="pn">4</span></div>
<div class="toc" style="left:183.7px;top:416.13px;width:381.1px;font-size:9.8px"><span class="tx">Форматирование оглавления</span><span class="ld">............................................................................................................................................</span><span class="pn">5</span></div>
<div class="toc" style="left:183.7px;top:433.52px;width:381.1px;font-size:9.8px"><span class="tx">Варианты дизайна оглавления</span><span class="ld">............................................................................................................................................</span><span class="pn">6</span></div>
<div class="toc" style="left:183.7px;top:450.91px;width:381.1px;font-size:9.8px"><span class="tx">Работа с оглавлением</span><span class="ld">............................................................................................................................................</span><span class="pn">6</span></div>
<div class="toc" style="left:183.7px;top:468.30px;width:381.1px;font-size:9.8px"><span class="tx">Обновление оглавления</span><span class="ld">............................................................................................................................................</span><span class="pn">6</span></div>
<div class="toc" style="left:183.7px;top:485.69px;width:381.1px;font-size:9.8px"><span class="tx">Изменение уровней оглавления</span><span class="ld">............................................................................................................................................</span><span class="pn">7</span></div>
<div class="toc" style="left:183.7px;top:503.08px;width:381.1px;font-size:9.8px"><span class="tx">Исправление ошибок в оглавлении</span><span class="ld">............................................................................................................................................</span><span class="pn">7</span></div>
<div class="toc" style="left:174.1px;top:520.47px;width:390.7px;font-size:9.8px"><span class="tx">Нумерация страниц</span><span class="ld">............................................................................................................................................</span><span class="pn">7</span></div>
<div class="toc" style="left:183.7px;top:537.86px;width:381.1px;font-size:9.8px"><span class="tx">Где размещают номера страниц?</span><span class="ld">............................................................................................................................................</span><span class="pn">7</span></div>
<div class="toc" style="left:183.7px;top:555.25px;width:381.1px;font-size:9.8px"><span class="tx">Способы добавления номеров</span><span class="ld">............................................................................................................................................</span><span class="pn">8</span></div>
<div class="toc" style="left:183.7px;top:572.64px;width:381.1px;font-size:9.8px"><span class="tx">Настройка параметров нумерации</span><span class="ld">............................................................................................................................................</span><span class="pn">8</span></div>
<div class="toc" style="left:183.7px;top:590.03px;width:381.1px;font-size:9.8px"><span class="tx">Положение номера на странице</span><span class="ld">............................................................................................................................................</span><span class="pn">9</span></div>
<div class="toc" style="left:183.7px;top:607.42px;width:381.1px;font-size:9.8px"><span class="tx">Формат номера страницы</span><span class="ld">............................................................................................................................................</span><span class="pn">9</span></div>
<div class="toc" style="left:183.7px;top:624.81px;width:381.1px;font-size:9.8px"><span class="tx">Проблемы с нумерацией страниц</span><span class="ld">............................................................................................................................................</span><span class="pn">9</span></div>
<div class="toc" style="left:183.7px;top:642.20px;width:381.1px;font-size:9.8px"><span class="tx">Номера на титульной странице</span><span class="ld">............................................................................................................................................</span><span class="pn">10</span></div>
<div class="t " style="left:704px;top:161.10px;font-size:9.83px;color:#1e1e1e;">Для создания оглавления и нумерации страниц</div>
<div class="t " style="left:704px;top:174.03px;font-size:9.83px;color:#1e1e1e;">необходимые инструменты, и сам процесс дост</div>
<div class="t " style="left:665.5px;width:400px;text-align:right;top:161.10px;font-size:9.83px;color:#1e1e1e;">и Word предоставляет все</div>
<div class="t " style="left:694px;width:400px;text-align:right;top:174.03px;font-size:9.83px;color:#1e1e1e;">очно простое. В этом подробном</div>
<div class="t " style="left:704px;top:161.10px;font-size:9.83px;color:#1e1e1e;"></div>
<div class="t " style="left:704px;top:174.03px;font-size:9.83px;color:#1e1e1e;"></div>
<div class="t " style="left:704px;top:186.96px;font-size:9.83px;color:#1e1e1e;">руководстве вы узнаете обо всех нюансах работы с оглавлением в Word на</div>
<div class="t " style="left:704px;top:199.89px;font-size:9.83px;color:#1e1e1e;">конкретных примерах — от начальной подготовки документа и разметки заголовков до</div>
<div class="t " style="left:704px;top:212.82px;font-size:9.83px;color:#1e1e1e;">форматирования и обновления. Также подробно разберем процесс нумерации</div>
<div class="t " style="left:704px;top:225.75px;font-size:9.83px;color:#1e1e1e;">страниц в тексте и решение возможных проблем с ней.</div>
<div class="t " style="left:704px;top:255.45px;font-size:14.2px;color:#222;">Подготовка структуры документа</div>
<div class="t " style="left:704px;top:279.20px;font-size:9.83px;color:#1e1e1e;">Перед тем как создавать оглавление, нужно продумать логическую структуру</div>
<div class="t " style="left:704px;top:292.13px;font-size:9.83px;color:#1e1e1e;">документа и разбить его на разделы с заголовками и подзаголовками. Это важно не</div>
<div class="t " style="left:704px;top:305.06px;font-size:9.83px;color:#1e1e1e;">только для удобства читателей, но и залог корректного формирования оглавления.</div>
<div class="t " style="left:704px;top:330.70px;font-size:9.83px;color:#1e1e1e;">Оптимальная структура такова:</div>
<div style="position:absolute;left:721.5px;top:360.6px;width:3.5px;height:3.5px;background:#000;border-radius:50%"></div>
<div class="t " style="left:736.5px;top:356.70px;font-size:9.83px;color:#1e1e1e;">Разделы первого уровня (главы)</div>
<div style="position:absolute;left:721.5px;top:373.53000000000003px;width:3.5px;height:3.5px;background:#000;border-radius:50%"></div>
<div class="t " style="left:736.5px;top:369.63px;font-size:9.83px;color:#1e1e1e;">Разделы второго уровня (параграфы в главах)</div>
<div style="position:absolute;left:721.5px;top:386.46000000000004px;width:3.5px;height:3.5px;background:#000;border-radius:50%"></div>
<div class="t " style="left:736.5px;top:382.56px;font-size:9.83px;color:#1e1e1e;">При необходимости — <span class="sq">подпараграфы</span> (третий уровень)</div>
<div class="t " style="left:704px;top:408.20px;font-size:9.83px;color:#1e1e1e;">Количество уровней зависит от объема и сложности информации. Для небольшой</div>
<div class="t " style="left:704px;top:421.13px;font-size:9.83px;color:#1e1e1e;">брошюры достаточно двух, для монографии может потребоваться и четыре-пять.</div>
<div class="t " style="left:704px;top:434.06px;font-size:9.83px;color:#1e1e1e;">Главное — чтобы текст логически распадался на разделы, а заголовки точно отражали</div>
<div class="t " style="left:704px;top:446.99px;font-size:9.83px;color:#1e1e1e;">их суть и были понятные.</div>
<div class="t " style="left:704px;top:476.15px;font-size:14.2px;color:#222;">Стили заголовков и подзаголовков</div>
<div class="t " style="left:704px;top:500.30px;font-size:9.83px;color:#1e1e1e;">Теперь, когда структура готова, приступаем к формированию заголовков. Для</div>
<div class="t " style="left:704px;top:513.23px;font-size:9.83px;color:#1e1e1e;">автоматического создания оглавления в Word нужно использовать стили. Применение</div>
<div class="t " style="left:704px;top:526.16px;font-size:9.83px;color:#1e1e1e;">стилей — это обязательное условие, иначе оглавление формироваться не будет.</div>
<div class="t " style="left:704px;top:551.90px;font-size:9.83px;color:#1e1e1e;">Стиль в Word <span class="gq">- это</span> именованный набор форматирования, который включает шрифт,</div>
<div class="t " style="left:704px;top:564.83px;font-size:9.83px;color:#1e1e1e;">его начертание, размер, выравнивание, отступы и интервалы. Стили позволяют</div>
<div class="t " style="left:704px;top:577.76px;font-size:9.83px;color:#1e1e1e;">быстро и единообразно форматировать однотипные элементы документа.</div>
<div class="t " style="left:704px;top:603.80px;font-size:9.83px;color:#1e1e1e;">Для заголовков в Word по умолчанию предусмотрено девять стилей — Заголовок 1-9.</div>
<div class="t " style="left:704px;top:616.73px;font-size:9.83px;color:#1e1e1e;">Они отличаются размером шрифта и некоторыми другими параметрами. Этого вполне</div>
<div class="t " style="left:704px;top:629.66px;font-size:9.83px;color:#1e1e1e;">достаточно для структурирования практически любого документа.</div>
<div class="t " style="left:704px;top:668.99px;font-size:12.5px;color:#333;">Создание заголовков</div>
<div style="position:absolute;left:398.8px;top:189.5px;width:1px;height:20px;background:#555;"></div>
<div style="position:absolute;left:0px;top:679px;width:1280px;height:14px;background:#f3f3f3;"></div>
<div style="position:absolute;left:805px;top:90.5px;width:140px;height:100px;background:#fdfdfd;border:1px solid #c8c8c8;box-shadow:1px 1px 2px rgba(0,0,0,0.18)"></div>
<div class="t " style="left:827.5px;top:95.26px;font-size:8px;color:#222;"><u>В</u>верху страницы</div>
<svg style="position:absolute;left:935px;top:96.5px" width="4" height="6" viewBox="0 0 4 6"><path d="M0 0 L3.5 3 L0 6Z" fill="#222"/></svg>
<div class="t " style="left:827.5px;top:111.26px;font-size:8px;color:#222;">В<u>н</u>изу страницы</div>
<svg style="position:absolute;left:935px;top:112.5px" width="4" height="6" viewBox="0 0 4 6"><path d="M0 0 L3.5 3 L0 6Z" fill="#222"/></svg>
<div class="t " style="left:827.5px;top:127.26px;font-size:8px;color:#222;">На <u>п</u>олях страницы</div>
<svg style="position:absolute;left:935px;top:128.5px" width="4" height="6" viewBox="0 0 4 6"><path d="M0 0 L3.5 3 L0 6Z" fill="#222"/></svg>
<div class="t " style="left:827.5px;top:143.96px;font-size:8px;color:#222;"><u>Т</u>екущее положение</div>
<svg style="position:absolute;left:935px;top:145.2px" width="4" height="6" viewBox="0 0 4 6"><path d="M0 0 L3.5 3 L0 6Z" fill="#222"/></svg>
<div class="t " style="left:827.5px;top:160.56px;font-size:8px;color:#222;"><u>Ф</u>ормат номеров страниц...</div>
<div class="t " style="left:827.5px;top:176.06px;font-size:8px;color:#222;"><u>У</u>далить номера страниц</div>
<div style="position:absolute;left:827px;top:156px;width:117px;height:1px;background:#e2e2e2;"></div>
<svg style="position:absolute;left:810px;top:94.0px" width="9" height="10" viewBox="0 0 9 10"><path d="M0.5 0.5 H5.5 L8 3 V9.5 H0.5Z" fill="#fff" stroke="#777" stroke-width="0.9"/></svg>
<svg style="position:absolute;left:810px;top:110.0px" width="9" height="10" viewBox="0 0 9 10"><path d="M0.5 0.5 H5.5 L8 3 V9.5 H0.5Z" fill="#fff" stroke="#777" stroke-width="0.9"/></svg>
<svg style="position:absolute;left:810px;top:126.0px" width="9" height="10" viewBox="0 0 9 10"><path d="M0.5 0.5 H5.5 L8 3 V9.5 H0.5Z" fill="#fff" stroke="#777" stroke-width="0.9"/></svg>
<svg style="position:absolute;left:810px;top:142.7px" width="9" height="10" viewBox="0 0 9 10"><path d="M0.5 0.5 H5.5 L8 3 V9.5 H0.5Z" fill="#fff" stroke="#777" stroke-width="0.9"/></svg>
<svg style="position:absolute;left:810px;top:94px" width="9" height="5" viewBox="0 0 9 5"><rect x="2" y="1.5" width="3" height="2" fill="#5a8ac6"/></svg>
<svg style="position:absolute;left:810px;top:112px" width="9" height="6" viewBox="0 0 9 6"><rect x="2.5" y="2" width="3" height="2" fill="#5a8ac6"/></svg>
<svg style="position:absolute;left:810px;top:128px" width="9" height="6" viewBox="0 0 9 6"><rect x="0.8" y="2.5" width="2.5" height="2.2" fill="#3b72b6"/></svg>
<svg style="position:absolute;left:810px;top:145px" width="9" height="6" viewBox="0 0 9 6"><path d="M2.5 2 H6 M4.2 2 V5" stroke="#888" stroke-width="0.9"/></svg>
<svg style="position:absolute;left:808px;top:159px" width="12" height="12" viewBox="0 0 12 12"><path d="M1.5 0.5 H6 L8 2.5 V5 M1.5 0.5 V9 H4" fill="none" stroke="#999" stroke-width="0.9"/><rect x="4.5" y="5" width="6.5" height="6" fill="#fff" stroke="#666" stroke-width="0.9"/><path d="M6.5 7.2 H7.3 M8.5 7.2 H9.3 M6.5 9.2 H7.3 M8.5 9.2 H9.3" stroke="#555" stroke-width="0.9"/></svg>
<svg style="position:absolute;left:808px;top:175px" width="12" height="12" viewBox="0 0 12 12"><path d="M1.5 0.5 H6 L8 2.5 V5 M1.5 0.5 V9 H4" fill="none" stroke="#999" stroke-width="0.9"/><path d="M4.5 5.5 L10.5 11 M10.5 5.5 L4.5 11" stroke="#d63b3b" stroke-width="1.3"/></svg>
<div class="t " style="left:8px;top:682.12px;font-size:7.6px;color:#333;">Страница 1 из 10</div>
<div class="t " style="left:81.5px;top:682.30px;font-size:7.4px;color:#333;">Число слов: 1917</div>
<svg style="position:absolute;left:152px;top:681px" width="12" height="10" viewBox="0 0 12 10"><path d="M0.5 0.5 H4.5 V9.5 H0.5Z M4.5 0.5 H7 M4.5 9.5 H8" fill="none" stroke="#555" stroke-width="0.9"/><path d="M7 3 L10.5 6.5 M10.5 3 L7 6.5 M7 8 H10.5" stroke="#555" stroke-width="0.9"/></svg>
<div class="t " style="left:174px;top:682.12px;font-size:7.6px;color:#333;">русский</div>
<svg style="position:absolute;left:214px;top:681px" width="11" height="10" viewBox="0 0 11 10"><circle cx="4.5" cy="4.5" r="3.3" fill="none" stroke="#444" stroke-width="1"/><path d="M5 5 L10 10 M10 5 L5 10" stroke="#444" stroke-width="1.1"/></svg>
<div class="t " style="left:227.8px;top:681.78px;font-size:7.98px;color:#222;-webkit-text-stroke:0.25px #222">Специальные возможности: проверьте рекомендации</div>
<svg style="position:absolute;left:863px;top:681px" width="10" height="10" viewBox="0 0 10 10"><path d="M5 0.5 L9.5 3 V7.5 L5 10 L0.5 7.5 V3Z" fill="#444"/><path d="M5 5 L9.5 3 M5 5 V10 M5 5 L0.5 3" stroke="#f3f3f3" stroke-width="0.7"/></svg>
<div class="t " style="left:875px;top:681.90px;font-size:7.85px;color:#333;">Запускаем среду выполнения надстройки. Минутку...</div>
<svg style="position:absolute;left:1086px;top:682px" width="10" height="9" viewBox="0 0 10 9"><path d="M0.5 0.5 H9.5 V8.5 H0.5Z M5 0.5 V8.5" fill="none" stroke="#777" stroke-width="0.9"/><path d="M2 3 L3.8 5 L2 7 M8 3 L6.2 5 L8 7" stroke="#777" stroke-width="0.8" fill="none"/></svg>
<div style="position:absolute;left:1105px;top:679px;width:25.5px;height:14px;background:#c8c8c8;"></div>
<svg style="position:absolute;left:1113px;top:681px" width="11" height="10" viewBox="0 0 11 10"><rect x="0.5" y="0.5" width="10" height="9" fill="none" stroke="#555"/><path d="M2.5 4 H8.5 M2.5 6 H8.5" stroke="#555"/></svg>
<svg style="position:absolute;left:1139px;top:681px" width="11" height="10" viewBox="0 0 11 10"><path d="M0.5 0.5 H8 V4.5 M0.5 0.5 V9.5 H5" fill="none" stroke="#666" stroke-width="0.9"/><path d="M2 3 H6 M2 5 H4" stroke="#666" stroke-width="0.8"/><circle cx="8" cy="7.5" r="2.2" fill="none" stroke="#666" stroke-width="0.9"/></svg>
<div style="position:absolute;left:1162px;top:685.5px;width:5px;height:1px;background:#555;"></div>
<div style="position:absolute;left:1171px;top:686px;width:66px;height:1px;background:#666;"></div>
<div style="position:absolute;left:1203px;top:682px;width:3px;height:8px;background:#444;"></div>
<div style="position:absolute;left:1241px;top:685.5px;width:5px;height:1px;background:#555;"></div>
<div style="position:absolute;left:1243px;top:683.5px;width:1px;height:5px;background:#aaa;"></div>
<div class="t " style="left:1255px;top:682.12px;font-size:7.6px;color:#333;">100 %</div>
<svg style="position:absolute;left:11px;top:700px" width="11" height="12" viewBox="0 0 11 12"><path d="M0 1.7 L4.6 1 V5.6 H0Z M5.4 0.9 L11 0 V5.6 H5.4Z M0 6.4 H4.6 V11 L0 10.3Z M5.4 6.4 H11 V12 L5.4 11.1Z" fill="#fff"/></svg>
<svg style="position:absolute;left:42px;top:700px" width="12" height="12" viewBox="0 0 12 12"><circle cx="6" cy="6" r="4.8" fill="none" stroke="#fff" stroke-width="1.4"/></svg>
<div style="position:absolute;left:70px;top:718px;width:25px;height:2px;background:#76b9ed;"></div>
<div style="position:absolute;left:101px;top:718px;width:26px;height:2px;background:#76b9ed;"></div>
<div style="position:absolute;left:134px;top:718px;width:26px;height:2px;background:#76b9ed;"></div>
<div style="position:absolute;left:167px;top:718px;width:26px;height:2px;background:#76b9ed;"></div>
<div style="position:absolute;left:199px;top:718px;width:26px;height:2px;background:#76b9ed;"></div>
<div style="position:absolute;left:229px;top:693px;width:33px;height:27px;background:#3b3d40;"></div>
<div style="position:absolute;left:230px;top:718px;width:31px;height:2px;background:#8cc8f8;"></div>
<svg style="position:absolute;left:74px;top:699px" width="16" height="14" viewBox="0 0 16 14"><path d="M0.5 1 H6 L7.5 3 H15.5 V13 H0.5Z" fill="#f3c24a"/><rect x="0.5" y="5" width="15" height="8" fill="#ffd768"/><rect x="5" y="8" width="6" height="5" fill="#3e8fd8"/></svg>
<svg style="position:absolute;left:107px;top:698px" width="16" height="16" viewBox="0 0 16 16"><circle cx="8" cy="8" r="7.8" fill="#fff"/><path d="M4.8 3.5 L8 8.5 L11.2 3.5 M8 8.5 V13" fill="none" stroke="#e4362c" stroke-width="1.9"/></svg>
<svg style="position:absolute;left:139px;top:697px" width="18" height="18" viewBox="0 0 18 18"><path d="M9 1.2 A7.6 7.6 0 1 1 3.2 14 L1.3 16.8 L2.2 12.8 A7.6 7.6 0 0 1 9 1.2Z" fill="none" stroke="#3fcf5b" stroke-width="1.7"/><path d="M6 5.5 Q5.3 7.8 7.5 10.5 Q10 12.8 12 12 L12.2 10.8 L10.5 10 L9.8 10.7 Q8 9.7 7.3 8 L8 7.3 L7.3 5.5Z" fill="#3fcf5b"/></svg>
<svg style="position:absolute;left:172px;top:697px" width="17" height="18" viewBox="0 0 17 18"><path d="M8.5 1 Q15.5 1 15.8 7.5 Q16 13 10 14.2 L7.5 17 V14.2 Q1.2 13.5 1.2 7.5 Q1.5 1 8.5 1Z" fill="#fff" stroke="#7d5ec7" stroke-width="1.5"/><path d="M5.5 4.8 Q5 7.5 7.8 10.2 Q10.3 12.3 11.8 11 L11.5 9.8 L10 9.3 L9.3 10 Q7.5 9 6.8 7.2 L7.5 6.5 L7 5Z" fill="#7d5ec7"/></svg>
<svg style="position:absolute;left:204px;top:698px" width="17" height="16" viewBox="0 0 17 16"><path d="M4 0.5 L16 2 L12 15.5 L1 13Z" fill="#bfe3e8" stroke="#7cb6c3" stroke-width="0.8"/><path d="M4 0.5 L8 3 L5 14 L1 13Z" fill="#e8f6f7"/></svg>
<svg style="position:absolute;left:236px;top:698px" width="19" height="16" viewBox="0 0 19 16"><rect x="6" y="0.5" width="12.5" height="15" rx="1" fill="#2b7cd3"/><rect x="6" y="0.5" width="12.5" height="4" fill="#41a5ee"/><rect x="6" y="11.5" width="12.5" height="4" fill="#185abd"/><rect x="0" y="3.5" width="9.5" height="9.5" rx="1" fill="#185abd"/><path d="M1.6 5.5 L3 11 L4.75 6.5 L6.5 11 L7.9 5.5" fill="none" stroke="#fff" stroke-width="1"/></svg>
<svg style="position:absolute;left:1116px;top:703px" width="10" height="6" viewBox="0 0 10 6"><path d="M0.5 5.5 L5 1 L9.5 5.5" fill="none" stroke="#fff" stroke-width="1"/></svg>
<svg style="position:absolute;left:1131px;top:701px" width="12" height="11" viewBox="0 0 12 11"><rect x="2" y="2.5" width="9.5" height="6.5" fill="none" stroke="#ddd" stroke-width="0.9"/><rect x="0.5" y="0.5" width="3" height="4" fill="#232324" stroke="#ddd" stroke-width="0.9"/><path d="M5 10.5 H9" stroke="#ddd"/></svg>
<svg style="position:absolute;left:1147px;top:701px" width="12" height="11" viewBox="0 0 12 11"><path d="M0.5 3.8 H2.5 L5.5 1 V10 L2.5 7.2 H0.5Z" fill="none" stroke="#ddd" stroke-width="0.9"/><path d="M7.3 3.5 Q8.3 5.5 7.3 7.5 M9 2 Q10.8 5.5 9 9 M10.6 0.8 Q13 5.5 10.6 10.2" fill="none" stroke="#ddd" stroke-width="0.9"/></svg>
<svg style="position:absolute;left:1163px;top:701px" width="12" height="12" viewBox="0 0 12 12"><path d="M1 1.5 H5 M7 1.5 H11 M1 4 H5 M7 4 H11" stroke="#ddd" stroke-width="1.1"/><rect x="0.5" y="5" width="7" height="7" rx="1" fill="#e03c3c"/><path d="M2.5 7 H5.5 V8.5 H2.5 V10.5 H5.5" fill="none" stroke="#fff" stroke-width="0.8"/></svg>
<div class="t " style="left:1182px;top:702.44px;font-size:7.8px;color:#fff;">РУС</div>
<div class="t " style="left:1022px;width:400px;text-align:center;top:696.44px;font-size:7.8px;color:#fff;">16:00</div>
<div class="t " style="left:1023px;width:400px;text-align:center;top:708.94px;font-size:7.8px;color:#fff;">25.01.2024</div>
<svg style="position:absolute;left:1252px;top:700px" width="13" height="12" viewBox="0 0 13 12"><path d="M0.7 0.7 H12.3 V8.5 H8 L6.5 10.8 L5 8.5 H0.7Z" fill="none" stroke="#fff" stroke-width="1"/></svg>
<div style="position:absolute;left:1276px;top:693px;width:1px;height:27px;background:#555;"></div></body></html>
